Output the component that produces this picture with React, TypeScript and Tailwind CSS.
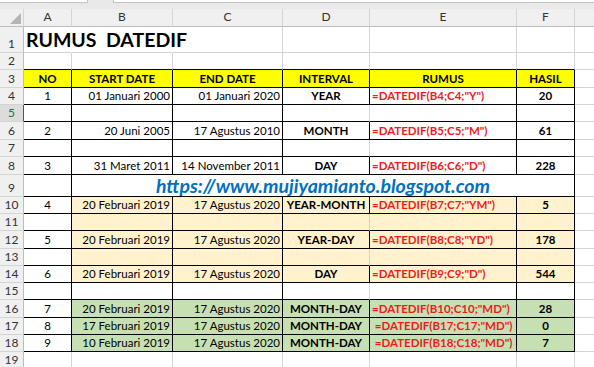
import React from 'react';

type Line = 'k' | 'g' | 'n';
type Align = 'l' | 'c' | 'r';

interface CellData {
  t?: string;
  a?: Align;
  b?: boolean;
  red?: boolean;
}

const COL_W = ['w-[48px]', 'w-[101px]', 'w-[110px]', 'w-[87px]', 'w-[147px]', 'w-[58px]'];
const LETTERS = ['A', 'B', 'C', 'D', 'E', 'F'];

const ROW_H: Record<number, string> = {
  1: 'h-[26px]', 2: 'h-[17px]', 3: 'h-[18px]', 4: 'h-[17px]', 5: 'h-[17px]', 6: 'h-[18px]',
  7: 'h-[17px]', 8: 'h-[18px]', 9: 'h-[22px]', 10: 'h-[17px]', 11: 'h-[17px]', 12: 'h-[18px]',
  13: 'h-[17px]', 14: 'h-[17px]', 15: 'h-[17px]', 16: 'h-[18px]', 17: 'h-[17px]', 18: 'h-[17px]',
  19: 'h-[17px]',
};

const RIGHT: Record<Line, string> = {
  k: 'border-r-black',
  g: 'border-r-[#d4d4d4]',
  n: 'border-r-transparent',
};
const BOTTOM: Record<Line, string> = {
  k: 'border-b-black',
  g: 'border-b-[#d4d4d4]',
  n: 'border-b-transparent',
};
const JUSTIFY: Record<Align, string> = { l: 'justify-start', c: 'justify-center', r: 'justify-end' };

const EMPTY_ROWS = [5, 7, 11, 13, 15];

// row number -> the six cells A..F
const DATA: Record<number, CellData[]> = {
  3: [
    { t: 'NO', a: 'c', b: true },
    { t: 'START DATE', a: 'c', b: true },
    { t: 'END DATE', a: 'c', b: true },
    { t: 'INTERVAL', a: 'c', b: true },
    { t: 'RUMUS', a: 'c', b: true },
    { t: 'HASIL', a: 'c', b: true },
  ],
  4: [
    { t: '1', a: 'c' },
    { t: '01 Januari 2000', a: 'r' },
    { t: '01 Januari 2020', a: 'r' },
    { t: 'YEAR', a: 'c', b: true },
    { t: '=DATEDIF(B4;C4;"Y")', a: 'l', b: true, red: true },
    { t: '20', a: 'c', b: true },
  ],
  6: [
    { t: '2', a: 'c' },
    { t: '20 Juni 2005', a: 'r' },
    { t: '17 Agustus 2010', a: 'r' },
    { t: 'MONTH', a: 'c', b: true },
    { t: '=DATEDIF(B5;C5;"M")', a: 'l', b: true, red: true },
    { t: '61', a: 'c', b: true },
  ],
  8: [
    { t: '3', a: 'c' },
    { t: '31 Maret 2011', a: 'r' },
    { t: '14 November 2011', a: 'r' },
    { t: 'DAY', a: 'c', b: true },
    { t: '=DATEDIF(B6;C6;"D")', a: 'l', b: true, red: true },
    { t: '228', a: 'c', b: true },
  ],
  10: [
    { t: '4', a: 'c' },
    { t: '20 Februari 2019', a: 'r' },
    { t: '17 Agustus 2020', a: 'r' },
    { t: 'YEAR-MONTH', a: 'c', b: true },
    { t: '=DATEDIF(B7;C7;"YM")', a: 'l', b: true, red: true },
    { t: '5', a: 'c', b: true },
  ],
  12: [
    { t: '5', a: 'c' },
    { t: '20 Februari 2019', a: 'r' },
    { t: '17 Agustus 2020', a: 'r' },
    { t: 'YEAR-DAY', a: 'c', b: true },
    { t: '=DATEDIF(B8;C8;"YD")', a: 'l', b: true, red: true },
    { t: '178', a: 'c', b: true },
  ],
  14: [
    { t: '6', a: 'c' },
    { t: '20 Februari 2019', a: 'r' },
    { t: '17 Agustus 2020', a: 'r' },
    { t: 'DAY', a: 'c', b: true },
    { t: '=DATEDIF(B9;C9;"D")', a: 'l', b: true, red: true },
    { t: '544', a: 'c', b: true },
  ],
  16: [
    { t: '7', a: 'c' },
    { t: '20 Februari 2019', a: 'r' },
    { t: '17 Agustus 2020', a: 'r' },
    { t: 'MONTH-DAY', a: 'c', b: true },
    { t: '=DATEDIF(B10;C10;"MD")', a: 'l', b: true, red: true },
    { t: '28', a: 'c', b: true },
  ],
  17: [
    { t: '8', a: 'c' },
    { t: '17 Februari 2019', a: 'r' },
    { t: '17 Agustus 2020', a: 'r' },
    { t: 'MONTH-DAY', a: 'c', b: true },
    { t: ' =DATEDIF(B17;C17;"MD")', a: 'l', b: true, red: true },
    { t: '0', a: 'c', b: true },
  ],
  18: [
    { t: '9', a: 'c' },
    { t: '10 Februari 2019', a: 'r' },
    { t: '17 Agustus 2020', a: 'r' },
    { t: 'MONTH-DAY', a: 'c', b: true },
    { t: ' =DATEDIF(B18;C18;"MD")', a: 'l', b: true, red: true },
    { t: '7', a: 'c', b: true },
  ],
};

const fillFor = (row: number, col: number) => {
  if (row === 3) return 'bg-[#ffff00]';
  if (col === 0) return 'bg-white';
  if (row >= 10 && row <= 14) return 'bg-[#fff2cc]';
  if (row >= 16 && row <= 18) return 'bg-[#c6e0b4]';
  return 'bg-white';
};

const rightLine = (row: number, col: number): Line => {
  if (row === 1) return col < 2 ? 'n' : 'g';
  if (row >= 3 && row <= 18) {
    if (col === 3 && EMPTY_ROWS.includes(row)) return 'g';
    return 'k';
  }
  return 'g';
};

const bottomLine = (row: number): Line => (row >= 2 && row <= 18 ? 'k' : 'g');

const RowHeader = ({ n }: { n: number }) => {
  const active = n === 5;
  return (
    <div
      className={`flex w-[24px] shrink-0 items-end justify-center border-b border-r border-b-[#d4d4d4] pb-[1px] text-[12px] leading-[14px] ${
        active
          ? 'border-r-[#217346] bg-[#dcdcdc] text-[#217346]'
          : 'border-r-[#bdbdbd] bg-[#f0f0f0] text-[#333]'
      }`}
    >
      {n}
    </div>
  );
};

const Cell = ({ row, col, data }: { row: number; col: number; data?: CellData }) => (
  <div
    className={`flex shrink-0 items-end overflow-hidden whitespace-pre border-b border-r px-[2px] pb-[1px] text-[11.5px] leading-[14px] ${
      COL_W[col]
    } ${RIGHT[rightLine(row, col)]} ${BOTTOM[bottomLine(row)]} ${fillFor(row, col)} ${
      JUSTIFY[data?.a ?? 'l']
    } ${data?.b ? 'font-bold' : ''} ${data?.red ? 'text-[#ee1c1c]' : 'text-black'}`}
  >
    {data?.t}
  </div>
);

const Filler = () => <div className="flex-1 border-b border-b-[#d4d4d4] bg-white" />;

const Row = ({ n }: { n: number }) => (
  <div className={`flex ${ROW_H[n]}`}>
    <RowHeader n={n} />
    {LETTERS.map((_, i) => (
      <Cell key={i} row={n} col={i} data={DATA[n]?.[i]} />
    ))}
    <Filler />
  </div>
);

export default function App() {
  return (
    <div className="h-[367px] w-[594px] overflow-hidden bg-white font-['Lato',sans-serif] text-black">
      {/* formula bar edge */}
      <div className="flex h-[9px] bg-[#e9e9e9]">
        <div className="h-[3px] w-[88px] border-b border-r border-[#c3c3c3] bg-white" />
        <div className="ml-[25px] h-[3px] flex-1 border-b border-l border-[#c3c3c3] bg-white" />
      </div>

      {/* column headers */}
      <div className="flex h-[18px]">
        <div className="relative w-[24px] shrink-0 border-b border-r border-b-[#bdbdbd] border-r-[#d4d4d4] bg-[#f0f0f0]">
          <svg className="absolute bottom-[2px] right-[2px]" width="11" height="11" viewBox="0 0 11 11">
            <polygon points="11,0 11,11 0,11" fill="#b5b5b5" />
          </svg>
        </div>
        {LETTERS.map((l, i) => (
          <div
            key={l}
            className={`flex shrink-0 items-end justify-center border-b border-r border-b-[#bdbdbd] border-r-[#d4d4d4] bg-[#f0f0f0] pb-[2px] text-[12px] leading-[14px] text-[#333] ${COL_W[i]}`}
          >
            {l}
          </div>
        ))}
        <div className="flex-1 border-b border-b-[#bdbdbd] bg-[#f0f0f0]" />
      </div>

      {/* row 1: title overflows into B and C */}
      <div className={`flex ${ROW_H[1]}`}>
        <RowHeader n={1} />
        <div className="relative z-10 flex w-[48px] shrink-0 items-end whitespace-pre border-b border-r border-b-[#d4d4d4] border-r-transparent pl-[2px] pb-[1px]">
          <span className="text-[19.5px] font-bold leading-[22px]">RUMUS  DATEDIF</span>
        </div>
        {[1, 2, 3, 4, 5].map((i) => (
          <Cell key={i} row={1} col={i} />
        ))}
        <Filler />
      </div>

      {[2, 3, 4, 5, 6, 7, 8].map((n) => (
        <Row key={n} n={n} />
      ))}

      {/* row 9: merged B..F with the blog link */}
      <div className={`flex ${ROW_H[9]}`}>
        <RowHeader n={9} />
        <Cell row={9} col={0} />
        <div className="flex w-[503px] shrink-0 items-end justify-center border-b border-r border-black bg-white">
          <span className="text-[19.5px] font-bold italic leading-[21px] text-[#0070c0]">
            https://www.mujiyamianto.blogspot.com
          </span>
        </div>
        <Filler />
      </div>

      {[10, 11, 12, 13, 14, 15, 16, 17, 18, 19].map((n) => (
        <Row key={n} n={n} />
      ))}
    </div>
  );
}
